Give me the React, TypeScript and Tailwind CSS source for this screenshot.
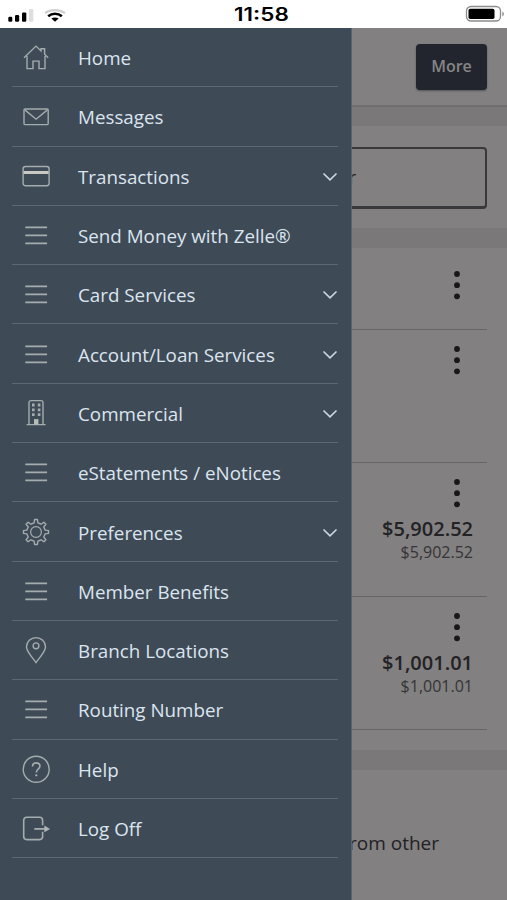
import { useState } from 'react'
import type { ReactNode } from 'react'
import clsx from 'clsx'

type IconName = 'home' | 'mail' | 'card' | 'lines' | 'building' | 'gear' | 'pin' | 'help' | 'logoff'

interface MenuItem {
  label: string
  icon: IconName
  expandable?: boolean
}

const MENU_ITEMS: MenuItem[] = [
  { label: 'Home', icon: 'home' },
  { label: 'Messages', icon: 'mail' },
  { label: 'Transactions', icon: 'card', expandable: true },
  { label: 'Send Money with Zelle®', icon: 'lines' },
  { label: 'Card Services', icon: 'lines', expandable: true },
  { label: 'Account/Loan Services', icon: 'lines', expandable: true },
  { label: 'Commercial', icon: 'building', expandable: true },
  { label: 'eStatements / eNotices', icon: 'lines' },
  { label: 'Preferences', icon: 'gear', expandable: true },
  { label: 'Member Benefits', icon: 'lines' },
  { label: 'Branch Locations', icon: 'pin' },
  { label: 'Routing Number', icon: 'lines' },
  { label: 'Help', icon: 'help' },
  { label: 'Log Off', icon: 'logoff' },
]

const ACCOUNTS: { balance?: string; available?: string; height: string }[] = [
  { height: 'h-[82px]' },
  { height: 'h-[133px]' },
  { balance: '$5,902.52', available: '$5,902.52', height: 'h-[134px]' },
  { balance: '$1,001.01', available: '$1,001.01', height: 'h-[133px]' },
]

// All icons are drawn on a 28x28 grid
const ICONS: Record<IconName, ReactNode> = {
  home: (
    <path d="M2 14.7 14 3.1l5 4.8V5.7h3.6v5.6l3.6 3.4M5 12.9v12.7h6v-7.5h6v7.5h6V12.9" />
  ),
  mail: (
    <>
      <rect x="2" y="7" width="24.2" height="15.6" rx="1" />
      <path d="m2.8 7.9 11.3 9.3L25.4 7.9" />
    </>
  ),
  card: (
    <>
      <rect x="1.1" y="4.5" width="26" height="19.2" rx="2.4" />
      <path d="M1.6 10.5h25" strokeWidth="3" stroke="#c9c8c4" />
    </>
  ),
  lines: <path d="M3.3 6.3h21.8M3.3 14.3h21.8M3.3 22.3h21.8" strokeWidth="1.7" />,
  building: (
    <>
      <path d="M4.6 25.6h19M7 25.4V3.6a2 2 0 0 1 2-2h10a2 2 0 0 1 2 2v21.8" />
      <path d="M10 6h2.6M15.8 6h2.6M10 10.8h2.6M15.8 10.8h2.6M10 15.6h2.6M15.8 15.6h2.6" strokeWidth="2.8" />
      <path d="M12 25.5v-5.4h4.4v5.4z" fill="#b5bcb5" stroke="none" />
    </>
  ),
  gear: (
    <>
      <path
        strokeLinejoin="round"
        d="M12.1 4.9 12.6 1.5h2.8l.5 3.4 3.2 1.3L21.9 4.2l2 2-2.1 2.7 1.3 3.2 3.4.5v2.8l-3.4.5-1.3 3.2 2.1 2.7-2 2-2.8-2-3.2 1.3-.5 3.4h-2.8l-.5-3.4-3.2-1.3-2.8 2-2-2 2.1-2.7-1.3-3.2-3.4-.5v-2.8l3.4-.5 1.3-3.2-2.1-2.7 2-2 2.8 2z"
      />
      <circle cx="14" cy="14" r="5.4" strokeWidth="1.2" />
    </>
  ),
  pin: (
    <>
      <path d="M14 26.6C10.4 21.2 4.5 16 4.5 10.8a9.5 9.2 0 0 1 19 0c0 5.2-5.9 10.4-9.5 15.8z" />
      <circle cx="14" cy="9.8" r="2.9" />
    </>
  ),
  help: (
    <>
      <circle cx="14.2" cy="14.3" r="13" />
      <path d="M10.5 11.6c0-2.3 1.6-3.7 3.7-3.7s3.7 1.4 3.7 3.4c0 2.8-3.6 2.9-3.6 6.1" strokeWidth="1.6" />
      <circle cx="14.3" cy="20.3" r="1.1" fill="#b0b6b6" stroke="none" />
    </>
  ),
  logoff: (
    <>
      <path
        d="M20.6 11.2V6.2a3 3 0 0 0-3-3H4.7a3 3 0 0 0-3 3v16.4a3 3 0 0 0 3 3h12.9a3 3 0 0 0 3-3v-4.9"
        strokeWidth="1.6"
      />
      <path d="M12.3 14.9h10.5" strokeWidth="1.8" />
      <path d="M22.3 11.5v6.8l5.7-3.4z" fill="#b0b6b6" stroke="none" />
    </>
  ),
}

function StatusBar() {
  return (
    <header className="grid h-7 shrink-0 grid-cols-3 items-center bg-white pr-0.5 pl-2 text-black">
      <div className="flex items-end gap-2.5 pt-0.5">
        <svg width="26" height="13" viewBox="0 0 26 13" aria-hidden="true">
          <rect x="0.3" y="7.8" width="4" height="5" rx="1.2" />
          <rect x="7" y="6" width="4.2" height="6.8" rx="1.2" />
          <rect x="14" y="3.4" width="4.3" height="9.4" rx="1.2" />
          <rect x="21" y="0" width="4.3" height="12.8" rx="1.2" fill="#dedede" />
        </svg>
        <svg width="22" height="13" viewBox="0 0 22 13" fill="none" strokeWidth="2.2" aria-hidden="true">
          <path d="M1 4.2c5.4-4.1 14.2-4.1 20 0" stroke="#d0d0d0" />
          <path d="M4.2 7.2c3.8-3.2 9.8-3.2 13.6 0" stroke="#000" strokeWidth="2.6" />
          <path d="M7.4 9.5c2-1.5 5.2-1.5 7.2 0L11 12.8z" fill="#000" />
        </svg>
      </div>
      <span className="mr-1.5 scale-x-125 justify-self-center pt-0.5 pl-3 font-[Inter,sans-serif] text-[18px] leading-none font-semibold">
        11:58
      </span>
      <svg className="justify-self-end" width="40" height="18" viewBox="0 0 40 18" aria-hidden="true">
        <rect x="1.5" y="1.5" width="34" height="14.5" rx="4.5" fill="none" stroke="#8c8c8c" strokeWidth="1.3" />
        <rect x="3.5" y="3.8" width="26" height="10.2" rx="1.8" />
        <path d="M37.4 6.5c2 .8 2 4 0 4.8z" fill="#8c8c8c" />
      </svg>
    </header>
  )
}

function KebabDots() {
  return (
    <svg width="8" height="30" viewBox="0 0 8 30" fill="#181719" aria-hidden="true">
      <circle cx="4" cy="4" r="2.9" />
      <circle cx="4" cy="15.2" r="2.9" />
      <circle cx="4" cy="26.3" r="2.9" />
    </svg>
  )
}

function AccountsPage() {
  return (
    <main className="flex h-full flex-col bg-[#7a7879] text-[#232225]">
      <div className="flex h-[79px] shrink-0 items-center justify-end border-b-2 border-[#706e6f] bg-[#828080] pr-5">
        <button
          type="button"
          className="h-[46px] w-[71px] rounded bg-[#22252e] pb-0.5 text-[16px] font-semibold text-[#858586] shadow-[0_1px_2px_#555]"
        >
          More
        </button>
      </div>

      <section className="mt-[19px] h-[102px] shrink-0 bg-[#828080] pt-[21px] pr-5">
        <div className="flex h-[62px] items-center rounded-sm border-2 border-b-[3px] border-[#39383a] pr-[129px]">
          <span className="ml-auto text-[18px]">r</span>
        </div>
      </section>

      <section className="mt-5 h-[502px] shrink-0 bg-[#828080] pr-5">
        {ACCOUNTS.map((account, i) => (
          <div
            key={i}
            className={clsx(
              'flex flex-col items-end border-b border-[#676566]',
              account.height,
              i === 0 ? 'pt-[22px]' : 'pt-[15px]',
            )}
          >
            <div className="flex pr-[26px]">
              <KebabDots />
            </div>
            {account.balance && (
              <div className="flex flex-col items-end pt-2 pr-3.5">
                <span className="text-[20px] leading-[26px] font-semibold">{account.balance}</span>
                <span className="text-[16px] leading-[20px] text-[#353437]">{account.available}</span>
              </div>
            )}
          </div>
        ))}
      </section>

      <section className="mt-5 flex grow items-start justify-end bg-[#828080] pt-[59px] pr-[68px]">
        <p className="text-[19px] leading-7">rom other</p>
      </section>
    </main>
  )
}

function SideMenu() {
  const [open, setOpen] = useState<string | null>(null)

  return (
    <nav className="absolute inset-y-0 left-0 w-[352px] border-r border-[#566472] bg-[#3f4a57] pr-[13px] pl-3">
      <ul>
        {MENU_ITEMS.map((item) => (
          <li key={item.label} className="h-[59.3px] border-b border-[#5b6875]">
            <button
              type="button"
              onClick={() => setOpen(open === item.label ? null : item.label)}
              className="flex h-full w-full items-center pl-2.5 text-left"
            >
              <svg
                className="shrink-0"
                width="28"
                height="28"
                viewBox="0 0 28 28"
                fill="none"
                stroke="#a4adad"
                strokeWidth="1.4"
                aria-hidden="true"
              >
                {ICONS[item.icon]}
              </svg>
              <span className="grow pt-0.5 pl-7 text-[18.8px] leading-7 whitespace-nowrap text-[#dbe5ef]">
                {item.label}
              </span>
              {item.expandable && (
                <svg
                  className={clsx('mt-0.5 shrink-0', open === item.label && 'rotate-180')}
                  width="16"
                  height="10"
                  viewBox="0 0 16 10"
                  fill="none"
                  stroke="#cbd8e4"
                  strokeWidth="1.6"
                  aria-hidden="true"
                >
                  <path d="m1.5 1.5 6.5 6.3 6.5-6.3" />
                </svg>
              )}
            </button>
          </li>
        ))}
      </ul>
    </nav>
  )
}

export default function App() {
  return (
    <div className="flex h-[900px] w-[507px] flex-col overflow-hidden font-['Open_Sans','Noto_Sans',sans-serif]">
      <StatusBar />
      <div className="relative min-h-0 grow">
        <AccountsPage />
        <SideMenu />
      </div>
    </div>
  )
}
